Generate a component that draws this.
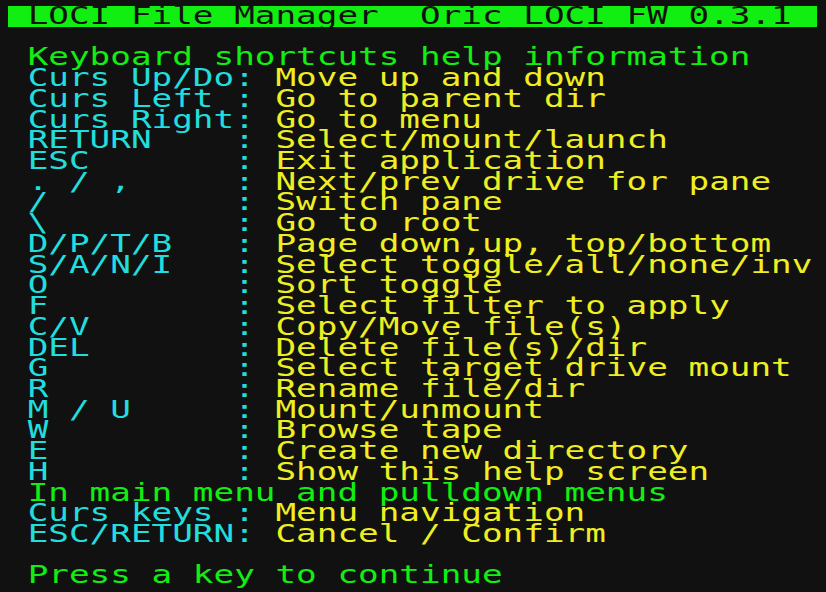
import React from "react";

type Seg = { t: string; c: "g" | "c" | "y" | "k" };

const colorClass: Record<Seg["c"], string> = {
  g: "text-[#11ee11]",
  c: "text-[#22dddd]",
  y: "text-[#eeee22]",
  k: "text-[#111111]",
};

const pad = (s: string, n: number) => (s + " ".repeat(n)).slice(0, n);

const kv = (k: string, v: string): Seg[] => [
  { t: " " + pad(k, 10) + ":", c: "c" },
  { t: " " + v, c: "y" },
];

const rows: (Seg[] | null)[] = [
  null,
  [],
  [{ t: " Keyboard shortcuts help information", c: "g" }],
  kv("Curs Up/Do", "Move up and down"),
  kv("Curs Left", "Go to parent dir"),
  kv("Curs Right", "Go to menu"),
  kv("RETURN", "Select/mount/launch"),
  kv("ESC", "Exit application"),
  kv(". / ,", "Next/prev drive for pane"),
  kv("/", "Switch pane"),
  kv("\\", "Go to root"),
  kv("D/P/T/B", "Page down,up, top/bottom"),
  kv("S/A/N/I", "Select toggle/all/none/inv"),
  kv("O", "Sort toggle"),
  kv("F", "Select filter to apply"),
  kv("C/V", "Copy/Move file(s)"),
  kv("DEL", "Delete file(s)/dir"),
  kv("G", "Select target drive mount"),
  kv("R", "Rename file/dir"),
  kv("M / U", "Mount/unmount"),
  kv("W", "Browse tape"),
  kv("E", "Create new directory"),
  kv("H", "Show this help screen"),
  [{ t: " In main menu and pulldown menus", c: "g" }],
  kv("Curs keys", "Menu navigation"),
  kv("ESC/RETURN", "Cancel / Confirm"),
  [],
  [{ t: " Press a key to continue", c: "g" }],
];

const textCls =
  "origin-left scale-x-[1.372] whitespace-pre font-['DejaVu_Sans_Mono',monospace] text-[25px] leading-[20.72px] h-[20.72px]";

export default function App() {
  return (
    <div className="w-[826px] h-[592px] bg-[#111111] overflow-hidden pt-[6px] pl-[6.5px]">
      {rows.map((r, i) =>
        r === null ? (
          <div key={i} className="h-[20.72px] ml-[1.5px] w-[809px] bg-[#11ee11]">
            <div className={textCls + " -ml-[1.5px]"}>
              <span className={colorClass.k}>
                {" LOCI File Manager  Oric LOCI FW 0.3.1"}
              </span>
            </div>
          </div>
        ) : (
          <div key={i} className="h-[20.72px]">
            <div className={textCls}>
              {r.map((s, j) => (
                <span key={j} className={colorClass[s.c]}>
                  {s.t}
                </span>
              ))}
            </div>
          </div>
        )
      )}
    </div>
  );
}
